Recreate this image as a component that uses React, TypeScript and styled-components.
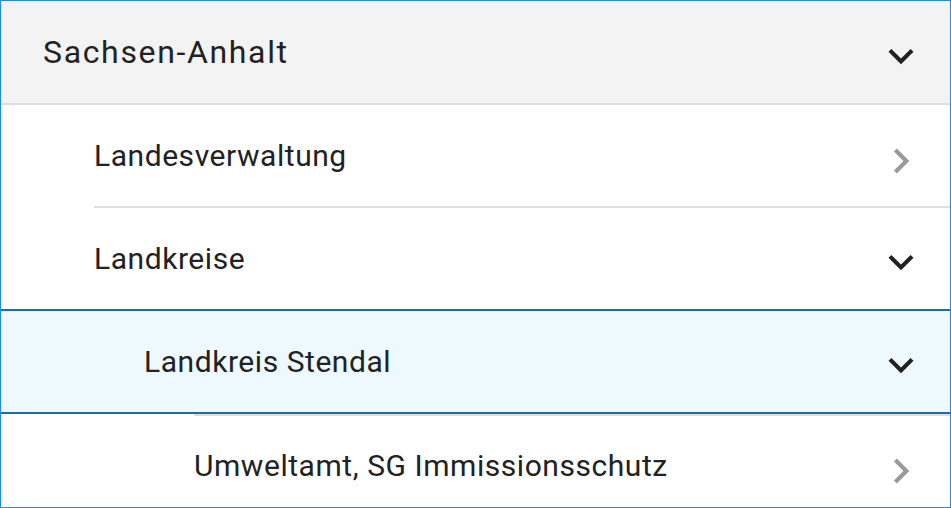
import React from "react";
import styled, { createGlobalStyle, css } from "styled-components";

const GlobalStyle = createGlobalStyle`
  html, body { margin: 0; padding: 0; background: #ffffff; }
  body { font-family: Roboto, "Liberation Sans", Arial, sans-serif; }
  * { box-sizing: border-box; }
`;

const Tree = styled.div`
  width: 951px;
  height: 508px;
  border: 1px solid #1a8aff;
  background: #ffffff;
  overflow: hidden;
  display: flex;
  flex-direction: column;
`;

const Header = styled.div`
  height: 104px;
  flex: none;
  background: #f3f3f3;
  border-bottom: 2px solid #dedede;
  display: flex;
  align-items: center;
  justify-content: space-between;
  padding: 0 0 0 42px;
`;

const HeaderTitle = styled.span`
  font-size: 32px;
  letter-spacing: 1.65px;
  color: #222222;
`;

const Row = styled.div<{ $indent: number; $selected?: boolean }>`
  flex: none;
  padding-left: ${(p) => p.$indent}px;
  background: ${(p) => (p.$selected ? "#eef8ff" : "#ffffff")};
  ${(p) =>
    p.$selected &&
    css`
      border-top: 2px solid #1a6da8;
      border-bottom: 2px solid #1a6da8;
    `}
`;

const RowInner = styled.div<{ $h: number; $bottomLine?: boolean; $topLine?: boolean }>`
  height: ${(p) => p.$h}px;
  display: flex;
  align-items: center;
  justify-content: space-between;
  border-bottom: ${(p) => (p.$bottomLine ? "2px solid #dedede" : "none")};
  border-top: ${(p) => (p.$topLine ? "2px solid #dedede" : "none")};
`;

const Label = styled.span`
  font-size: 30px;
  letter-spacing: 0.55px;
  color: #222222;
`;

const IconBox = styled.svg<{ $shift: number }>`
  width: 50px;
  height: 50px;
  flex: none;
  margin-right: 24px;
  margin-top: ${(p) => p.$shift}px;
`;

const ChevronDown = () => (
  <IconBox $shift={7} viewBox="0 0 24 24">
    <path fill="#212121" d="M16.59 8.59L12 13.17 7.41 8.59 6 10l6 6 6-6z" />
  </IconBox>
);

const ChevronRight = () => (
  <IconBox $shift={10} viewBox="0 0 24 24">
    <path fill="#9a9a9a" d="M10 6L8.59 7.41 13.17 12l-4.58 4.59L10 18l6-6z" />
  </IconBox>
);

export default function App() {
  return (
    <>
      <GlobalStyle />
      <Tree>
        <Header>
          <HeaderTitle>Sachsen-Anhalt</HeaderTitle>
          <ChevronDown />
        </Header>
        <Row $indent={93}>
          <RowInner $h={103} $bottomLine>
            <Label>Landesverwaltung</Label>
            <ChevronRight />
          </RowInner>
        </Row>
        <Row $indent={93}>
          <RowInner $h={101}>
            <Label>Landkreise</Label>
            <ChevronDown />
          </RowInner>
        </Row>
        <Row $indent={143} $selected>
          <RowInner $h={101}>
            <Label>Landkreis Stendal</Label>
            <ChevronDown />
          </RowInner>
        </Row>
        <Row $indent={193}>
          <RowInner $h={101} $topLine>
            <Label>Umweltamt, SG Immissionsschutz</Label>
            <ChevronRight />
          </RowInner>
        </Row>
      </Tree>
    </>
  );
}
